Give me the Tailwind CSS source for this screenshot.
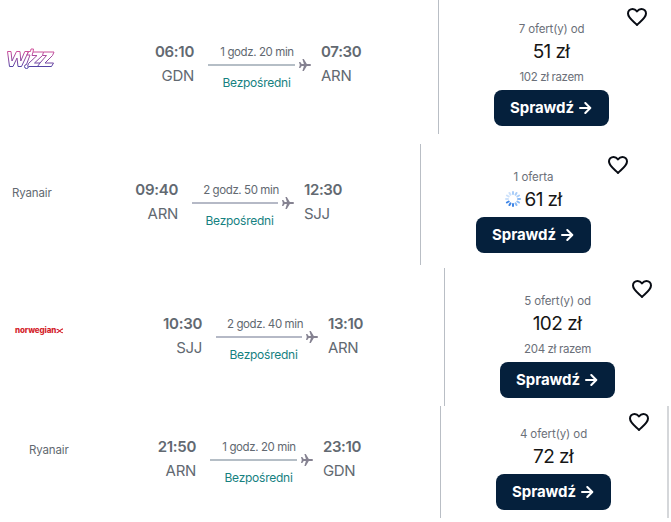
<!DOCTYPE html>
<html lang="pl">
<head>
<meta charset="utf-8">
<title>Loty</title>
<script src="https://cdn.jsdelivr.net/npm/@tailwindcss/browser@4"></script>
</head>
<body class="w-[671px] h-[522px] overflow-hidden bg-white text-[#626971] font-['Inter','Noto_Sans',sans-serif]">
<svg class="hidden">
  <symbol id="plane" viewBox="0 0 12 12"><path d="M0 3h1.3l1.4 2h2.2L3.4 0h1.4l3 5h2.7c.9 0 1.5.4 1.5 1s-.6 1-1.5 1H7.8l-3 5H3.4l1.5-5H2.7L1.3 9H0l.8-3z" fill="#858291"/></symbol>
  <symbol id="heart" viewBox="0 0 20 18"><path d="M10 3.4C8.700 1.800 7.400 1 5.600 1 3 1 1 3 1 5.600c0 4.300 5 7.500 9 11.300 4-3.800 9-7 9-11.300C19 3 17 1 14.400 1c-1.800 0-3.100.8-4.400 2.400z" fill="none" stroke="#080c14" stroke-width="2" stroke-linejoin="round"/></symbol>
  <symbol id="arrow" viewBox="0 0 13 12"><path d="M1 6h10M6.300 1l5 5-5 5" fill="none" stroke="#fff" stroke-width="2" stroke-linecap="round" stroke-linejoin="round"/></symbol>
</svg>
<main class="flex flex-col">

  <section class="flex h-[134px]">
    <div class="w-[438px] flex pt-10">
      <div class="w-[134px] pl-[6px] pt-[8px]">
        <svg width="49" height="22" viewBox="0 0 49 22" fill="none" stroke="url(#wz)" stroke-width="1" stroke-linejoin="round">
          <defs><linearGradient id="wz" x1="0" y1="0" x2="0" y2="22" gradientUnits="userSpaceOnUse"><stop offset=".15" stop-color="#cf4f9b"/><stop offset=".9" stop-color="#4a43a5"/></linearGradient></defs>
          <path d="M1.500 3.500h3.500l1 9.500 4.500-9.500h3.500l.8 9.500 4-9.500H22.500L15.500 18.500h-3.500l-1-8.500-4 8.500H3.500z"/>
          <path d="M22.500 3.500h2l.5-2.500h2.500L27 4h10.500l-1 3.500L28.500 15h5.500l6.500-7.500H36.500M22.500 3.500L21 7h3l-3.500 9.500M27 4l-1 3.500h5L22.500 15.500l-1 3"/>
          <path d="M37.500 4h10.500l-1.500 3.500L39 15h8.500L45.500 18.500H22.500a2 2 0 1 1-2-2M31.500 18.500L34 15"/>
        </svg>
      </div>
      <div class="w-[60px] text-right text-[15px] leading-6 tracking-[-0.3px]"><p class="font-semibold">06:10</p><p>GDN</p></div>
      <div class="ml-[14px] w-[97px] text-center text-[12px] whitespace-nowrap tracking-[-0.25px]">
        <p class="h-6 pl-px text-[11.500px] leading-6 tracking-[-0.4px]">1 godz. 20 min</p>
        <div class="flex items-center h-[2px] w-[103px] gap-[4px]"><i class="block h-[2px] w-[87px] bg-[#b5bec6]"></i><svg class="w-3 h-3 shrink-0"><use href="#plane"/></svg></div>
        <p class="pt-[8px] leading-[18px] text-[#16817f]">Bezpośredni</p>
      </div>
      <div class="ml-[16px] text-[15px] leading-6 tracking-[-0.3px]"><p class="font-semibold">07:30</p><p>ARN</p></div>
    </div>
    <div class="flex border-l border-[#b9bec5] pl-[55px] gap-[18px]">
      <div class="w-[115px] pt-[19px] text-center text-[11.5px] tracking-[-0.15px] text-[#6b7079]">
        <p class="leading-5">7 ofert(y) od</p>
        <p class="h-6 pr-px text-[19px] leading-[26px] tracking-[-0.6px] text-[#161616]">51 zł</p>
        <p class="pt-[4px] h-[27px] leading-5 tracking-[-0.35px]">102 zł razem</p>
        <button class="flex w-[115px] h-9 items-center justify-center gap-[5px] rounded-lg bg-[#05203c] pr-px text-[15px] font-bold tracking-[-0.1px] text-white">Sprawdź<svg class="w-[13px] h-3"><use href="#arrow"/></svg></button>
      </div>
      <svg class="mt-[8px] w-5 h-[18px]"><use href="#heart"/></svg>
    </div>
  </section>

  <section class="mt-[10px] flex h-[121px]">
    <div class="w-[420px] flex pt-[34px]">
      <div class="w-[118px] pl-[12px] pt-[5px] text-[11.500px] leading-5 tracking-[-0.15px]">Ryanair</div>
      <div class="w-[60px] text-right text-[15px] leading-6 tracking-[-0.3px]"><p class="font-semibold">09:40</p><p>ARN</p></div>
      <div class="ml-[14px] w-[97px] text-center text-[12px] whitespace-nowrap tracking-[-0.25px]">
        <p class="h-6 pl-px text-[11.500px] leading-6 tracking-[-0.4px]">2 godz. 50 min</p>
        <div class="flex items-center h-[2px] w-[103px] gap-[4px]"><i class="block h-[2px] w-[86px] bg-[#b5b9c6]"></i><svg class="w-3 h-3 shrink-0"><use href="#plane"/></svg></div>
        <p class="pt-[8px] pr-[2px] leading-[18px] text-[#16817f]">Bezpośredni</p>
      </div>
      <div class="ml-[15px] text-[15px] leading-6 tracking-[-0.4px]"><p class="font-semibold">12:30</p><p>SJJ</p></div>
    </div>
    <div class="flex border-l border-[#b9bec5] pl-[55px] gap-[17px]">
      <div class="w-[115px] pt-[23px] text-center text-[11.5px] tracking-[-0.05px] text-[#6b7079]">
        <p class="leading-5">1 oferta</p>
        <p class="flex h-[30px] items-start justify-center gap-[4px] pr-px text-[19px] leading-[26px] tracking-[-0.6px] text-[#161616]">
          <svg class="mt-[4px] w-4 h-4" viewBox="-8 -8 16 16" stroke-width="2" stroke-linecap="round">
            <g stroke="#a9cdf8"><path d="M0-5V-7"/><path d="M0-5V-7" transform="rotate(30)"/><path d="M0-5V-7" transform="rotate(60)"/></g>
            <g stroke="#8abaf5"><path d="M0-5V-7" transform="rotate(90)"/><path d="M0-5V-7" transform="rotate(120)"/><path d="M0-5V-7" transform="rotate(150)"/></g>
            <g stroke="#3e85e6"><path d="M0-5V-7" transform="rotate(180)"/><path d="M0-5V-7" transform="rotate(210)"/><path d="M0-5V-7" transform="rotate(240)"/></g>
            <g stroke="#cce1fb"><path d="M0-5V-7" transform="rotate(270)"/><path d="M0-5V-7" transform="rotate(300)"/><path d="M0-5V-7" transform="rotate(330)"/></g>
          </svg>61 zł</p>
        <button class="flex w-[115px] h-9 items-center justify-center gap-[5px] rounded-lg bg-[#05203c] pr-px text-[15px] font-bold tracking-[-0.1px] text-white">Sprawdź<svg class="w-[13px] h-3"><use href="#arrow"/></svg></button>
      </div>
      <svg class="mt-[12px] w-5 h-[18px]"><use href="#heart"/></svg>
    </div>
  </section>

  <section class="mt-[3px] flex h-[138px]">
    <div class="w-[444px] flex pt-[44px]">
      <div class="w-[142px] pl-[15px] pt-[13px] flex text-[8px] leading-[10px] font-extrabold tracking-[-0.1px] text-[#d41f2c]">norwegian<svg class="mt-[3px]" width="8" height="6" viewBox="0 0 8 7" fill="none" stroke="#d41f2c" stroke-width="1.300"><path d="M0 1.500c4 0 3.500 4 7.500 4M0 5.500c3 0 4-4 7.500-4.500"/></svg></div>
      <div class="w-[60px] text-right text-[15px] leading-6 tracking-[-0.3px]"><p class="font-semibold">10:30</p><p>SJJ</p></div>
      <div class="ml-[14px] w-[97px] text-center text-[12px] whitespace-nowrap tracking-[-0.25px]">
        <p class="h-6 pl-px text-[11.500px] leading-6 tracking-[-0.4px]">2 godz. 40 min</p>
        <div class="flex items-center h-[2px] w-[103px] gap-[4px]"><i class="block h-[2px] w-[86px] bg-[#b5b9c6]"></i><svg class="w-3 h-3 shrink-0"><use href="#plane"/></svg></div>
        <p class="pt-[8px] pr-[2px] leading-[18px] text-[#16817f]">Bezpośredni</p>
      </div>
      <div class="ml-[15px] text-[15px] leading-6 tracking-[-0.4px]"><p class="font-semibold">13:10</p><p>ARN</p></div>
    </div>
    <div class="flex border-l border-[#b9bec5] pl-[55px] gap-[17px]">
      <div class="w-[115px] pt-[23px] text-center text-[11.5px] tracking-[-0.1px] text-[#6b7079]">
        <p class="leading-5">5 ofert(y) od</p>
        <p class="h-6 pr-px text-[19px] leading-[26px] tracking-[-0.5px] text-[#161616]">102 zł</p>
        <p class="pt-[4px] h-[27px] leading-5 tracking-[-0.35px]">204 zł razem</p>
        <button class="flex w-[115px] h-9 items-center justify-center gap-[5px] rounded-lg bg-[#05203c] pr-px text-[15px] font-bold tracking-[-0.1px] text-white">Sprawdź<svg class="w-[13px] h-3"><use href="#arrow"/></svg></button>
      </div>
      <svg class="mt-[12px] w-5 h-[18px]"><use href="#heart"/></svg>
    </div>
  </section>

  <section class="flex h-[112px] w-[669px] border-r-2 border-[#d5d7da]">
    <div class="w-[440px] flex pt-[29px]">
      <div class="w-[136px] pl-[29px] pt-[5px] text-[11.500px] leading-5 tracking-[-0.15px]">Ryanair</div>
      <div class="w-[60px] text-right text-[15px] leading-6 tracking-[-0.3px]"><p class="font-semibold">21:50</p><p>ARN</p></div>
      <div class="ml-[14px] w-[97px] text-center text-[12px] whitespace-nowrap tracking-[-0.25px]">
        <p class="h-6 pl-px text-[11.500px] leading-6 tracking-[-0.4px]">1 godz. 20 min</p>
        <div class="flex items-center h-[2px] w-[103px] gap-[4px]"><i class="block h-[2px] w-[87px] bg-[#b5bec6]"></i><svg class="w-3 h-3 shrink-0"><use href="#plane"/></svg></div>
        <p class="pt-[8px] leading-[18px] text-[#16817f]">Bezpośredni</p>
      </div>
      <div class="ml-[16px] text-[15px] leading-6 tracking-[-0.4px]"><p class="font-semibold">23:10</p><p>GDN</p></div>
    </div>
    <div class="flex border-l border-[#b9bec5] pl-[55px] gap-[18px]">
      <div class="w-[115px] pt-[18px] text-center text-[11.5px] tracking-[-0.1px] text-[#6b7079]">
        <p class="leading-5">4 ofert(y) od</p>
        <p class="h-[30px] pr-px text-[19px] leading-[26px] tracking-[-0.6px] text-[#161616]">72 zł</p>
        <button class="flex w-[115px] h-9 items-center justify-center gap-[5px] rounded-lg bg-[#05203c] pr-px text-[15px] font-bold tracking-[-0.1px] text-white">Sprawdź<svg class="w-[13px] h-3"><use href="#arrow"/></svg></button>
      </div>
      <svg class="mt-[7px] w-5 h-[18px]"><use href="#heart"/></svg>
    </div>
  </section>
</main>
</body>
</html>
